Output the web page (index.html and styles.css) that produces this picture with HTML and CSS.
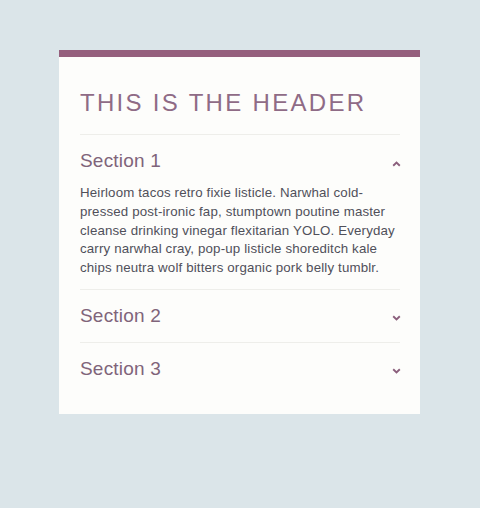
FILE: index.html
```html
<!DOCTYPE html>
<html>
<head>
<meta charset="utf-8">
<link rel="stylesheet" href="styles.css">
</head>
<body>
<div class="card">
  <h1 class="title">THIS IS THE HEADER</h1>
  <div class="section open">
    <div class="sec-head">
      <span class="sec-title">Section 1</span>
      <svg class="chev up" width="9" height="6" viewBox="0 0 9 6"><path d="M1.2 4.8 L4.5 1.6 L7.8 4.8" fill="none" stroke="currentColor" stroke-width="1.9"/></svg>
    </div>
    <p class="sec-body">Heirloom tacos retro fixie listicle. Narwhal cold-pressed post-ironic fap, stumptown poutine master cleanse drinking vinegar flexitarian YOLO. Everyday carry narwhal cray, pop-up listicle shoreditch kale chips neutra wolf bitters organic pork belly tumblr.</p>
  </div>
  <div class="section">
    <div class="sec-head">
      <span class="sec-title">Section 2</span>
      <svg class="chev" width="9" height="6" viewBox="0 0 9 6"><path d="M1.2 1.2 L4.5 4.4 L7.8 1.2" fill="none" stroke="currentColor" stroke-width="1.9"/></svg>
    </div>
  </div>
  <div class="section">
    <div class="sec-head">
      <span class="sec-title">Section 3</span>
      <svg class="chev" width="9" height="6" viewBox="0 0 9 6"><path d="M1.2 1.2 L4.5 4.4 L7.8 1.2" fill="none" stroke="currentColor" stroke-width="1.9"/></svg>
    </div>
  </div>
</div>
</body>
</html>
```
FILE: styles.css
```css
html, body {
  margin: 0;
  padding: 0;
  background: #dbe5e9;
}
body {
  padding: 50px 0 0 59px;
  font-family: "Liberation Sans", Arial, sans-serif;
}
.card {
  width: 320px;
  background: #fdfdfb;
  border-top: 7px solid #955f7d;
  padding: 0 20px 19px 21px;
}
.title {
  margin: 0;
  padding: 32px 0 17px;
  font-size: 24px;
  font-weight: normal;
  letter-spacing: 2.3px;
  color: #8f6b86;
  line-height: 28px;
  border-bottom: 1px solid #eeeeea;
}
.section {
  border-bottom: 1px solid #eeeeea;
}
.section:last-child {
  border-bottom: none;
}
.sec-head {
  display: flex;
  align-items: center;
  justify-content: space-between;
  height: 52px;
}
.sec-title {
  font-size: 19px;
  color: #80647a;
  letter-spacing: 0.2px;
}
.chev {
  color: #8b5f7c;
  margin-right: -1px;
  margin-top: 4px;
}
.chev.up {
  margin-top: 5px;
}
.sec-body {
  margin: -3px -6px 0 0;
  padding: 0 0 11px;
  font-size: 13.3px;
  line-height: 18.8px;
  letter-spacing: 0.15px;
  color: #50505a;
}
```
